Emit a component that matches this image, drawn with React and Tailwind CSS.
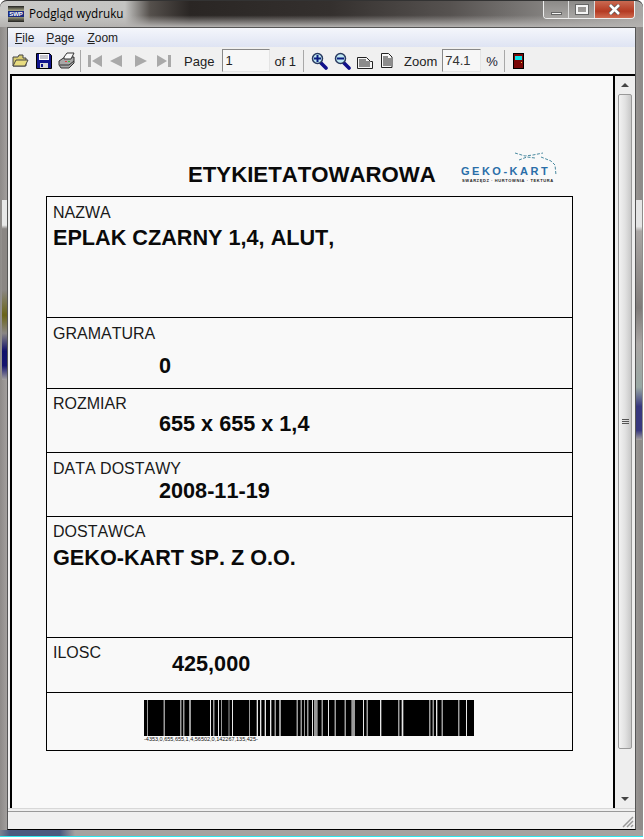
import React from 'react';

const gaps = [
  [51, 53], [101, 104], [150, 152], [155, 156], [160, 163], [178, 182], [240, 243], [250, 253], [264, 267],
  [274, 276], [296, 298], [306, 309], [358, 360], [380, 384], [390, 394], [404, 408], [420, 424], [434, 437],
  [448, 452], [500, 503], [512, 515], [522, 524], [532, 535], [546, 549], [552, 563], [575, 578], [594, 597],
  [614, 617], [644, 647], [664, 675], [699, 702], [710, 713], [750, 754], [805, 808], [815, 820], [898, 901],
  [908, 911], [918, 922], [935, 938], [985, 988], [1008, 1011],
];

const Barcode = () => (
  <svg width="330" height="36" viewBox="42 0 990 36" preserveAspectRatio="none" className="block">
    <rect x="42" y="0" width="990" height="36" fill="#000" />
    {gaps.map(([a, b]) => (
      <rect key={a} x={a} y="0" width={b - a} height="36" fill={b - a > 5 ? '#9a9a9a' : '#e8e8e8'} />
    ))}
  </svg>
);

const Logo = () => (
  <div className="relative w-[98px] h-[34px]">
    <svg width="98" height="34" className="absolute left-0 top-0">
      <path d="M54 2L64 5L72 4L82 2M58 9L66 6L74 7M80 6L90 10L94 14L95 24" fill="none" stroke="#4a8aa0" strokeWidth="1" strokeDasharray="3 1.5" />
    </svg>
    <div className="absolute left-0 top-[13px] text-[11px] leading-[15px] font-bold tracking-[2.5px] text-[#2a6ea8] whitespace-nowrap">GEKO-KART</div>
    <div className="absolute left-px top-[27px] text-[4px] leading-[5px] font-bold tracking-[0.6px] text-[#222] whitespace-nowrap">SWARZĘDZ · HURTOWNIA · TEKTURA</div>
  </div>
);

const Nav = ({ dir, bar, className }) => (
  <svg width="16" height="14" viewBox="0 0 16 14" className={className}>
    {dir === 'l' ? <path d={bar ? 'M15 1v12L5 7z' : 'M14 1v12L2 7z'} fill="#a9a9a9" /> : <path d={bar ? 'M1 1v12l10-6z' : 'M1 1v12l12-6z'} fill="#a9a9a9" />}
    {bar && <rect x={dir === 'l' ? 1 : 12} y="1" width="3" height="12" fill="#a9a9a9" />}
  </svg>
);

const Magnifier = ({ plus }) => (
  <svg width="17" height="18" viewBox="0 0 17 18">
    <path d="M9.500 10.500L15 16" stroke="#10108a" strokeWidth="3.600" strokeLinecap="round" />
    <circle cx="6.500" cy="6.500" r="5" fill="#bfe9f2" stroke="#2a3a60" strokeWidth="1.500" />
    <rect x="3" y="5.500" width="7" height="2" fill="#0a1a80" />
    {plus && <rect x="5.500" y="3" width="2" height="7" fill="#0a1a80" />}
  </svg>
);

const Row = ({ h, label, value, indent, labelTop, valueTop }) => (
  <div className={`border-b border-black ${h} flex flex-col shrink-0`}>
    <div className="pl-[6px] text-[16px] leading-[18px] text-[#1a1a1a]" style={{ paddingTop: labelTop }}>{label}</div>
    <div className="font-bold text-[#0a0a0a] whitespace-nowrap text-[21.650px] leading-[24px]" style={{ paddingLeft: indent, marginTop: valueTop }}>
      {value}
    </div>
  </div>
);

export default function App() {
  return (
    <div className="w-[644px] h-[839px] bg-white overflow-hidden font-['Liberation_Sans',Arial,sans-serif] relative">
      <div className="w-[643px] h-[837px] flex flex-col border-b border-[#2ee6ee] rounded-t-[7px] bg-[linear-gradient(90deg,#8d8a88_0px,#a5a2a0_8px,#a5a2a0_630px,#8f8c8a_640px)]">
        {/* title bar */}
        <div className="h-[27px] shrink-0 flex items-center pl-[8px] rounded-t-[7px] border-t border-[#333] [background-image:linear-gradient(180deg,transparent_55%,#b4b2b0_100%),linear-gradient(90deg,#c9c9c7_0px,#c4c4c2_125px,#55504c_150px,#2a2624_190px,#34302e_330px,#565250_450px,#8a8886_560px,#a8a6a4_640px)] relative">
          <div className="w-[16px] h-[16px] flex items-center justify-center bg-[linear-gradient(180deg,#222_0%,#eeeebb_45%,#222_100%)]">
            <span className="w-full text-center text-[6px] leading-none font-bold text-white bg-[#1a2a80]">SWP</span>
          </div>
          <span className="ml-[5px] text-[11.700px] text-black font-['Open_Sans',sans-serif]">Podgląd wydruku</span>
          {/* window buttons */}
          <div className="absolute left-[543px] top-0 w-[92px] h-[18px] flex rounded-b-[4px] border border-t-0 border-[#eee] overflow-hidden">
            <div className="w-[25px] flex items-center justify-center bg-[linear-gradient(180deg,#8c8a88,#a8a6a4)] border-r border-[#ddd]">
              <div className="w-[11px] h-[3px] mt-[7px] bg-[#f4f4f4] border border-[#666]" />
            </div>
            <div className="w-[26px] flex items-center justify-center bg-[linear-gradient(180deg,#8c8a88,#a8a6a4)] border-r border-[#ddd]">
              <div className="w-[12px] h-[9px] border-2 border-[#f4f4f4] outline outline-[#666]" />
            </div>
            <div className="flex-1 flex items-center justify-center bg-[linear-gradient(180deg,#c96a52,#b43a22_60%,#cf6b50)]">
              <svg width="13" height="11" viewBox="0 0 13 11"><path d="M2 1l9 9M11 1l-9 9" stroke="#555" strokeWidth="4" /><path d="M2 1l9 9M11 1l-9 9" stroke="#fff" strokeWidth="2.600" /></svg>
            </div>
          </div>
        </div>

        {/* window client */}
        <div className="mx-[7px] w-[629px] h-[803px] shrink-0 flex flex-col bg-[#f0f0f0] border border-[#555] border-b-black">
          {/* menu */}
          <div className="h-[19px] shrink-0 flex items-center pl-[7px] text-[12px] text-[#222] bg-[linear-gradient(180deg,#f4f6fb,#dfe4f3)]">
            <span><u>F</u>ile</span>
            <span className="ml-[12px]"><u>P</u>age</span>
            <span className="ml-[13px]"><u>Z</u>oom</span>
          </div>

          {/* toolbar */}
          <div className="h-[27px] shrink-0 flex items-center pl-[3px] text-[13px] text-[#222]">
            <svg width="17" height="14" viewBox="0 0 17 14" className="ml-px">
              <path d="M1 3h5l1-2h4v3h3v8H1z" fill="#d8cc70" stroke="#444" />
              <path d="M1 12l3-6h12l-3 6z" fill="#e8dc80" stroke="#444" />
            </svg>
            <svg width="16" height="16" viewBox="0 0 16 16" className="ml-[7px]">
              <path d="M.5 .5h13l2 2v13H.5z" fill="#10148c" stroke="#000" />
              <rect x="3" y="1" width="10" height="6" fill="#fff" />
              <path d="M4 3h8M4 5h8" stroke="#889" />
              <rect x="4" y="10" width="8" height="5" fill="#d8d8d8" />
              <rect x="5" y="11" width="2" height="3" fill="#10148c" />
            </svg>
            <svg width="18" height="18" viewBox="0 0 18 18" className="ml-[6px]">
              <path d="M1 9l6-4h9v6l-5 5H3L1 13z" fill="#a8a8a8" stroke="#333" />
              <path d="M6 5l3-4h7l-3 6H6z" fill="#f8f8f8" stroke="#333" />
              <path d="M2 13h9l5-4" fill="none" stroke="#333" />
              <rect x="7" y="9" width="2" height="1" fill="#e04040" />
              <rect x="10" y="9" width="2" height="1" fill="#40c040" />
            </svg>
            <div className="w-px h-[22px] bg-[#a8a8a8] ml-[4px] mr-[6px]" />
            <Nav dir="l" bar />
            <Nav dir="l" className="ml-[5px]" />
            <Nav dir="r" className="ml-[10px]" />
            <Nav dir="r" bar className="ml-[6px]" />
            <span className="ml-[12px] mt-[2px]">Page</span>
            <div className="ml-[8px] w-[48px] h-[23px] pl-[2px] leading-[21px] border border-[#888] border-r-[#e4e4e4] border-b-[#e4e4e4] bg-[#f7f7f7]">1</div>
            <span className="ml-[4px] mt-[2px]">of 1</span>
            <div className="w-px h-[22px] bg-[#a8a8a8] mx-[7px]" />
            <Magnifier plus />
            <span className="ml-[6px]"><Magnifier /></span>
            <svg width="16" height="12" viewBox="0 0 16 12" className="ml-[6px] mt-[5px]">
              <path d="M.5 11.500V.5h9l4 4 2 0v7z" fill="#f4f4f4" stroke="#222" />
              <path d="M2 3h7M2 5h11M2 7h11M2 9h11" stroke="#222" />
            </svg>
            <svg width="12" height="15" viewBox="0 0 12 15" className="ml-[8px]">
              <path d="M.5 .5h7l3.500 3.500v10.500H.5z" fill="#f8f8f8" stroke="#222" />
              <path d="M2 4h5M2 6h8M2 8h8M2 10h8M2 12h8" stroke="#222" />
            </svg>
            <span className="ml-[11px] mt-[2px]">Zoom</span>
            <div className="ml-[5px] w-[39px] h-[23px] pl-[2px] leading-[21px] border border-[#888] border-r-[#e4e4e4] border-b-[#e4e4e4] bg-[#f7f7f7] text-[#333]">74.1</div>
            <span className="ml-[5px] mt-[2px] text-[#223]">%</span>
            <div className="w-px h-[22px] bg-[#a8a8a8] ml-[6px] mr-[8px]" />
            <svg width="11" height="16" viewBox="0 0 11 16">
              <rect width="11" height="16" fill="#000" />
              <rect x="1" y="1" width="9" height="14" fill="#7a0808" />
              <rect x="2" y="3" width="7" height="4" fill="#0de0e8" />
              <rect x="8" y="9" width="1" height="1" fill="#f0c040" />
            </svg>
          </div>

          {/* preview area */}
          <div className="flex-1 min-h-0 flex border-t-2 border-l-2 border-black ml-[2px]">
            <div className="flex-1 bg-[#f9f9f9] pt-[85px] pl-[34px] [font-kerning:none]">
              <div className="w-[527px] h-[35px] relative">
                <div className="absolute left-[142px] top-[1px] text-[22.200px] leading-[26px] font-bold text-[#0a0a0a] whitespace-nowrap">ETYKIETATOWAROWA</div>
                <div className="absolute left-[415px] top-[-10px]"><Logo /></div>
              </div>
              <div className="w-[527px] h-[555px] border border-black flex flex-col">
                <Row h="h-[121px]" label="NAZWA" value="EPLAK CZARNY 1,4, ALUT," indent={6} labelTop={7} valueTop={4} />
                <Row h="h-[71px]" label="GRAMATURA" value="0" indent={112} labelTop={7} valueTop={11} />
                <Row h="h-[64px]" label="ROZMIAR" value="655 x 655 x 1,4" indent={112} labelTop={6} valueTop={-1} />
                <Row h="h-[64px]" label="DATA DOSTAWY" value="2008-11-19" indent={112} labelTop={7} valueTop={1} />
                <Row h="h-[121px]" label="DOSTAWCA" value="GEKO-KART SP. Z O.O." indent={6} labelTop={6} valueTop={5} />
                <Row h="h-[55px]" label="ILOSC" value="425,000" indent={125} labelTop={6} valueTop={-10} />
                <div className="flex-1 pt-[7px] pl-[97px]">
                  <Barcode />
                  <div className="text-[5.500px] leading-[6px] text-[#111] whitespace-nowrap">-4353,0,655,655,1,4,56502,0,142267,135,425-</div>
                </div>
              </div>
            </div>
            {/* scrollbar */}
            <div className="w-[22px] shrink-0 border-l-2 border-black bg-[#eeeeee] flex flex-col items-center">
              <div className="h-[18px] flex items-center justify-center">
                <div className="w-0 h-0 border-x-[4px] border-x-transparent border-b-[4px] border-b-[#444]" />
              </div>
              <div className="w-[14px] h-[655px] rounded-[2px] border border-[#999] bg-[linear-gradient(90deg,#f2f2f2,#e2e2e2_50%,#c8c8c8)] flex flex-col items-center justify-center gap-px">
                <div className="w-[7px] h-px bg-[#555]" />
                <div className="w-[7px] h-px bg-[#555]" />
                <div className="w-[7px] h-px bg-[#555]" />
              </div>
              <div className="flex-1 w-full" />
              <div className="h-[18px] flex items-center justify-center">
                <div className="w-0 h-0 border-x-[4px] border-x-transparent border-t-[4px] border-t-[#444]" />
              </div>
            </div>
          </div>

          {/* status bar */}
          <div className="h-[21px] shrink-0 border-t border-[#d8d8d8] relative">
            <div className="h-px mt-[2px] bg-[#999]" />
            <svg width="12" height="12" viewBox="0 0 12 12" className="absolute right-[1px] bottom-[1px]">
              <path d="M11 1L1 11M11 5L5 11M11 9L9 11" stroke="#999" strokeWidth="1.500" />
            </svg>
          </div>
        </div>
        {/* frame bottom */}
        <div className="flex-1 bg-[linear-gradient(90deg,#7a8090_0px,#4a5a80_10px,#4a5a80_60px,#a5a2a0_75px)]" />
      </div>
      {/* glass reflections on the frame edges */}
      <div className="absolute left-[2px] top-[200px] w-[5px] h-[180px] bg-[linear-gradient(180deg,#e8e8e8_0%,#e8e8e8_14%,#8a8684_16%,#8a8684_50%,#6a6418_64%,#8a8684_74%,#10106a_84%,#14146e_92%,#a5a2a0_100%)]" />
      <div className="absolute left-[636px] top-[200px] w-[6px] h-[240px] bg-[linear-gradient(180deg,#e4e4e4_0%,#e4e4e4_11%,#aaa6a4_13%,#807c7a_45%,#aaa6a4_60%,#9aa8a4_78%,#38387e_86%,#38387e_96%,#a5a2a0_100%)]" />
    </div>
  );
}
